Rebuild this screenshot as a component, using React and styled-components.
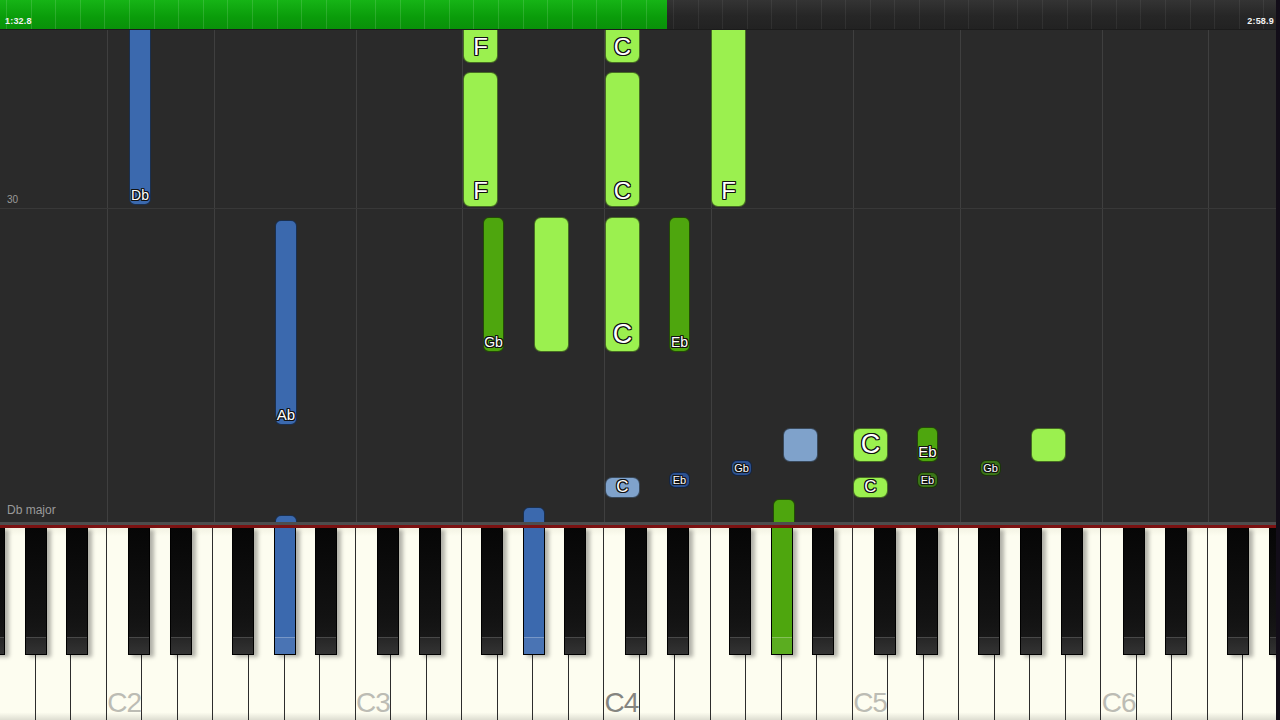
import React from 'react'
import styled, { createGlobalStyle } from 'styled-components'

const GlobalStyle = createGlobalStyle`
  html, body {
    margin: 0;
    padding: 0;
    background: #120d18;
    overflow: hidden;
  }
  * { box-sizing: border-box; }
`

// piano geometry (page pixels)
const C2_X = 107
const OCTAVE = 248.7
const WHITE_W = OCTAVE / 7
const BLACK_OFF = { 1: 21, 3: 63, 6: 125, 8: 167, 10: 208 }
const WHITE_STEPS = [0, 2, 4, 5, 7, 9, 11]
const NAMES = ['C', 'D', 'E', 'F', 'G', 'A', 'B']

const COLORS = {
  lime: '#9bf04f',
  green: '#4ea60e',
  dimGreen: '#3b7417',
  blue: '#3b69ae',
  dimBlue: '#2c5190',
  paleBlue: '#7fa2cb',
}

const notes = [
  { x: 129, w: 22, top: -40, h: 215, c: 'blue', label: 'Db', size: 14 },
  { x: 275, w: 22, top: 190, h: 205, c: 'blue', label: 'Ab', size: 15 },
  { x: 463, w: 35, top: -40, h: 73, c: 'lime', label: 'F', size: 24 },
  { x: 463, w: 35, top: 42, h: 135, c: 'lime', label: 'F', size: 24 },
  { x: 605, w: 35, top: -40, h: 73, c: 'lime', label: 'C', size: 24 },
  { x: 605, w: 35, top: 42, h: 135, c: 'lime', label: 'C', size: 24 },
  { x: 711, w: 35, top: -40, h: 217, c: 'lime', label: 'F', size: 24 },
  { x: 483, w: 21, top: 187, h: 135, c: 'green', label: 'Gb', size: 14 },
  { x: 534, w: 35, top: 187, h: 135, c: 'lime' },
  { x: 605, w: 35, top: 187, h: 135, c: 'lime', label: 'C', size: 27 },
  { x: 669, w: 21, top: 187, h: 135, c: 'green', label: 'Eb', size: 14 },
  { x: 605, w: 35, top: 447, h: 21, c: 'paleBlue', label: 'C', size: 17 },
  { x: 669, w: 21, top: 442, h: 16, c: 'dimBlue', label: 'Eb', size: 11 },
  { x: 731, w: 21, top: 430, h: 16, c: 'dimBlue', label: 'Gb', size: 11 },
  { x: 783, w: 35, top: 398, h: 34, c: 'paleBlue' },
  { x: 853, w: 35, top: 398, h: 34, c: 'lime', label: 'C', size: 27 },
  { x: 917, w: 21, top: 397, h: 35, c: 'green', label: 'Eb', size: 15 },
  { x: 853, w: 35, top: 447, h: 21, c: 'lime', label: 'C', size: 17 },
  { x: 917, w: 21, top: 442, h: 16, c: 'dimGreen', label: 'Eb', size: 11 },
  { x: 980, w: 21, top: 430, h: 16, c: 'dimGreen', label: 'Gb', size: 11 },
  { x: 1031, w: 35, top: 398, h: 34, c: 'lime' },
  { x: 275, w: 22, top: 485, h: 40, c: 'blue' },
  { x: 523, w: 22, top: 477, h: 40, c: 'blue' },
  { x: 773, w: 22, top: 469, h: 40, c: 'green' },
]

const pressed = { 'G#2': 'blue', 'G#3': 'blue', 'G#4': 'green' }

// keys from G1 up to G6
const whiteKeys = []
const blackKeys = []
for (let oct = 1; oct <= 6; oct++) {
  const base = C2_X + (oct - 2) * OCTAVE
  WHITE_STEPS.forEach((step, i) => {
    const x = base + i * WHITE_W
    if (x > -20 && x < 1276) whiteKeys.push({ name: NAMES[i] + oct, x })
  })
  Object.entries(BLACK_OFF).forEach(([step, off]) => {
    const x = base + off
    const sharp = NAMES[WHITE_STEPS.indexOf(Number(step) - 1)] + '#' + oct
    if (x > -25 && x < 1276) blackKeys.push({ name: sharp, x })
  })
}

// grid lines sit on every C and F
const gridLines = []
for (let oct = 2; oct <= 6; oct++) {
  const base = C2_X + (oct - 2) * OCTAVE
  gridLines.push(base, base + 3 * WHITE_W)
}

const Screen = styled.div`
  width: 1276px;
  height: 720px;
  display: flex;
  flex-direction: column;
  font-family: "Liberation Sans", Arial, sans-serif;
  overflow: hidden;
  background: #2a2a2a;
`

const TopBar = styled.div`
  height: 30px;
  display: flex;
  flex-shrink: 0;
  border-bottom: 1px solid #1b1b1b;
`

const Progress = styled.div`
  width: 667px;
  display: flex;
  align-items: flex-end;
  padding: 0 0 3px 5px;
  background:
    repeating-linear-gradient(90deg, transparent 0 6px, rgba(255,255,255,0.13) 6px 7px, transparent 7px 24.6px),
    linear-gradient(#16b416, #0a9c0a 60%, #099109);
`

const Remaining = styled.div`
  flex: 1;
  display: flex;
  align-items: flex-end;
  justify-content: flex-end;
  padding: 0 2px 3px 0;
  background:
    repeating-linear-gradient(90deg, transparent 0 6px, rgba(255,255,255,0.06) 6px 7px, transparent 7px 24.6px),
    linear-gradient(#343434, #262626 55%, #222);
`

const Time = styled.span`
  font-size: 9px;
  font-weight: bold;
  color: #f2f2f2;
  letter-spacing: 0.2px;
`

const Roll = styled.div`
  position: relative;
  flex: 1;
  background: #2a2a2a;
  overflow: hidden;
`

const VLine = styled.div`
  position: absolute;
  top: 0;
  bottom: 0;
  width: 1px;
  background: #3f3f3f;
`

const HLine = styled.div`
  position: absolute;
  left: 0;
  right: 0;
  top: 178px;
  height: 1px;
  background: #383838;
`

const SideText = styled.span`
  position: absolute;
  left: 7px;
  top: ${p => p.$top}px;
  color: #9a9a9a;
  font-size: ${p => p.$size}px;
`

const Note = styled.div`
  position: absolute;
  display: flex;
  align-items: flex-end;
  justify-content: center;
  border: 1px solid rgba(0, 0, 0, 0.55);
  border-radius: ${p => (p.$w > 30 ? 7 : 6)}px;
  background: ${p => COLORS[p.$c]};
`

const NoteLabel = styled.span`
  color: #fff;
  font-size: ${p => p.$size}px;
  line-height: 1;
  margin-bottom: ${p => (p.$size > 20 ? 3 : p.$size > 12 ? 2 : 1)}px;
  text-shadow:
    1px 0 0 #111, -1px 0 0 #111, 0 1px 0 #111, 0 -1px 0 #111,
    1px 1px 0 #111, -1px -1px 0 #111, 1px -1px 0 #111, -1px 1px 0 #111;
`

const Divider = styled.div`
  height: 6px;
  flex-shrink: 0;
  background: linear-gradient(#4d4d4d 0 3px, #7d1212 3px 6px);
`

const Keyboard = styled.div`
  position: relative;
  height: 192px;
  flex-shrink: 0;
  display: flex;
  padding-left: 0.4px;
  background: #fdfdf0;
`

const WhiteKey = styled.div`
  flex: 0 0 ${WHITE_W}px;
  height: 100%;
  display: flex;
  align-items: flex-end;
  justify-content: center;
  padding-bottom: 3px;
  border-right: 1px solid #2c2c2c;
  background: linear-gradient(#f3f3e4, #fdfdf0 8px, #fdfdf0 96%, #deded2);
`

const KeyName = styled.span`
  font-size: 28px;
  line-height: 1;
  letter-spacing: -1px;
  color: ${p => (p.$middle ? '#858580' : '#bcbcb4')};
`

const BlackKey = styled.div`
  position: absolute;
  top: 0;
  width: 22px;
  height: 127px;
  display: flex;
  flex-direction: column;
  justify-content: flex-end;
  border: 1px solid #000;
  border-top: none;
  background: ${p =>
    p.$c
      ? COLORS[p.$c]
      : 'linear-gradient(#060606, #121212 70%, #1c1c1c)'};
  box-shadow: 4px 2px 4px rgba(0, 0, 0, 0.3);
`

const KeyCap = styled.div`
  height: 17px;
  border-top: 1px solid ${p => (p.$c ? 'rgba(255,255,255,0.25)' : '#484848')};
  background: ${p =>
    p.$c
      ? 'rgba(255,255,255,0.08)'
      : 'linear-gradient(#262626, #333)'};
`

export default function App() {
  return (
    <>
      <GlobalStyle />
      <Screen>
        <TopBar>
          <Progress>
            <Time>1:32.8</Time>
          </Progress>
          <Remaining>
            <Time>2:58.9</Time>
          </Remaining>
        </TopBar>

        <Roll>
          {gridLines.map(x => (
            <VLine key={x} style={{ left: Math.round(x) }} />
          ))}
          <HLine />
          <SideText $size={10} $top={164}>30</SideText>
          <SideText $size={12} $top={473}>Db major</SideText>
          {notes.map((n, i) => (
            <Note
              key={i}
              $c={n.c}
              $w={n.w}
              style={{ left: n.x, top: n.top, width: n.w, height: n.h }}
            >
              {n.label && <NoteLabel $size={n.size}>{n.label}</NoteLabel>}
            </Note>
          ))}
        </Roll>

        <Divider />

        <Keyboard>
          {whiteKeys.map(k => (
            <WhiteKey key={k.name}>
              {k.name[0] === 'C' && <KeyName $middle={k.name === 'C4'}>{k.name}</KeyName>}
            </WhiteKey>
          ))}
          {blackKeys.map(k => (
            <BlackKey key={k.name} $c={pressed[k.name]} style={{ left: k.x }}>
              <KeyCap $c={pressed[k.name]} />
            </BlackKey>
          ))}
        </Keyboard>
      </Screen>
    </>
  )
}
